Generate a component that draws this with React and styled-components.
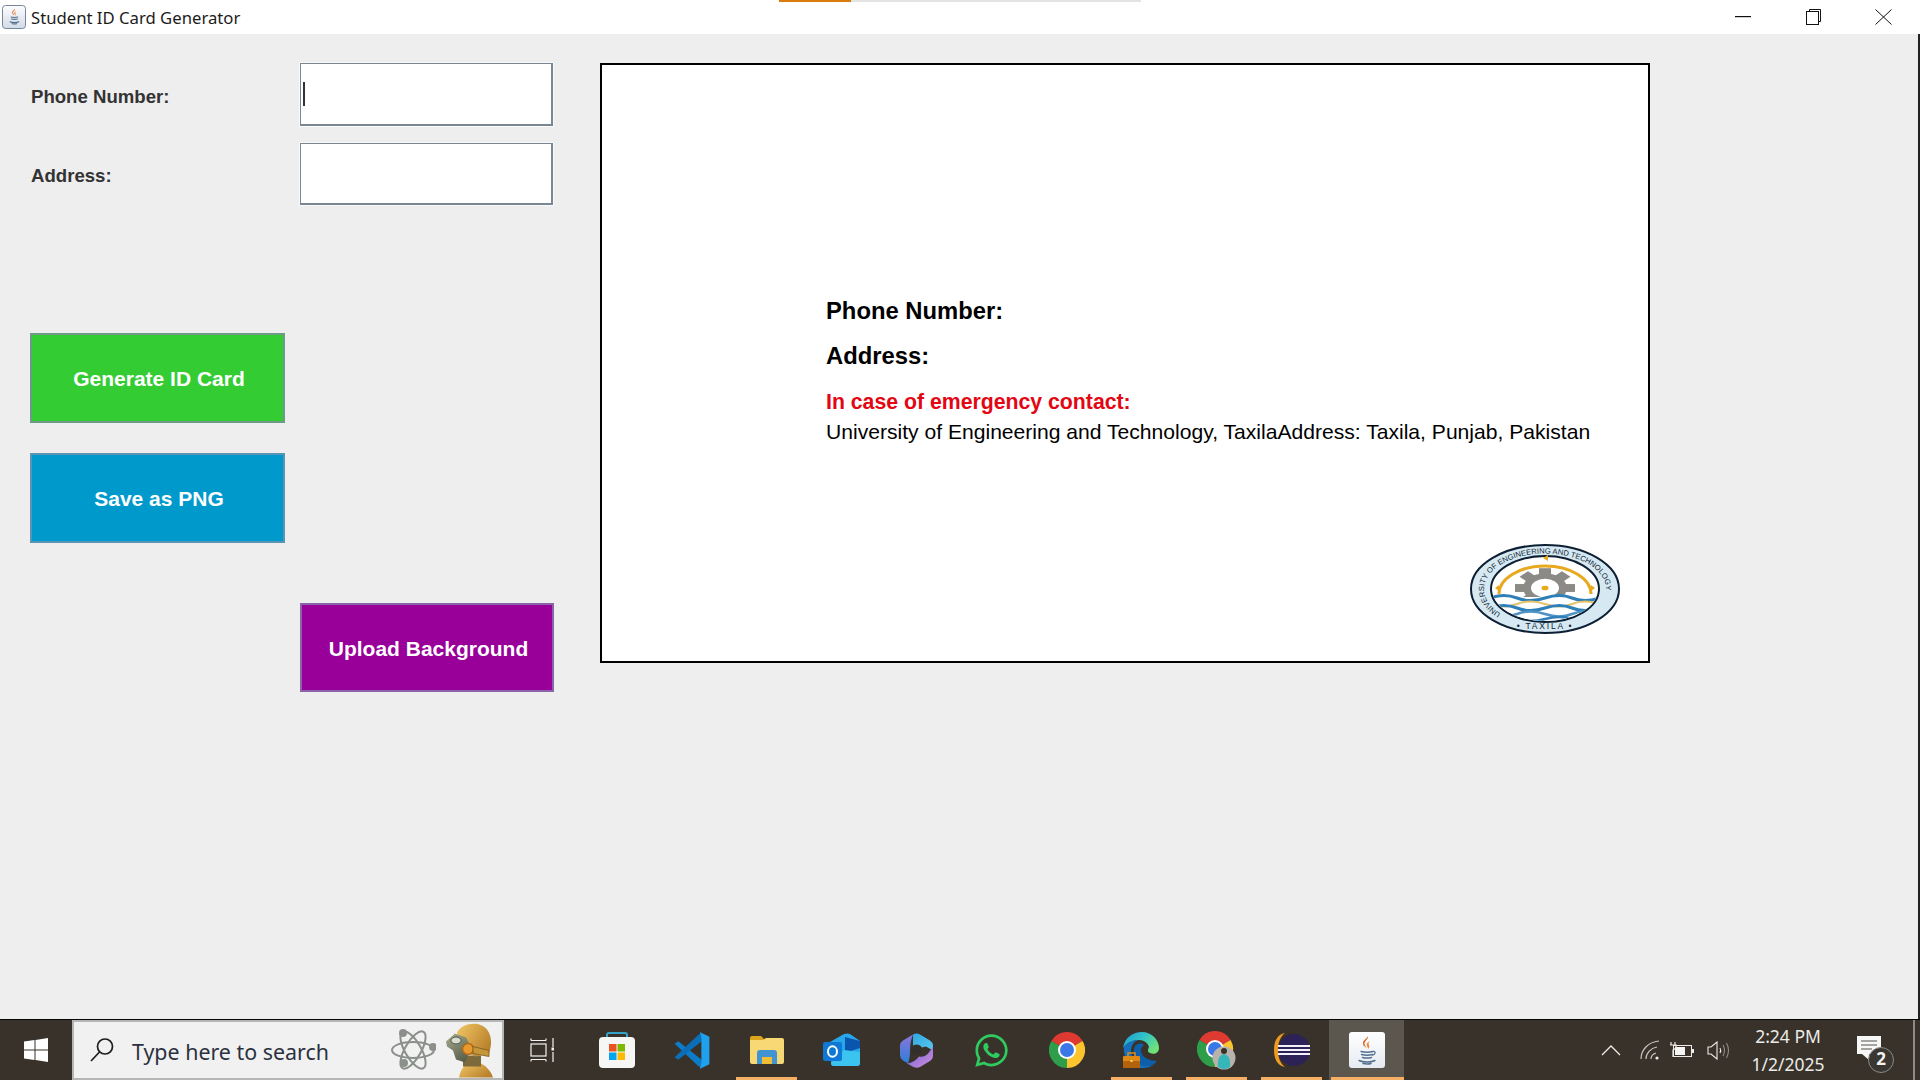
import React from 'react'
import styled, { createGlobalStyle } from 'styled-components'
import { FaWhatsapp } from 'react-icons/fa'

const Global = createGlobalStyle`
  html, body { margin: 0; padding: 0; background: #eee; }
  body { font-family: "Liberation Sans", Arial, sans-serif; }
`

const Screen = styled.div`
  width: 1920px;
  height: 1080px;
  display: flex;
  flex-direction: column;
  overflow: hidden;
  position: relative;
`

const TitleBar = styled.div`
  height: 34px;
  flex: none;
  background: #fff;
  display: flex;
  align-items: center;
  padding-left: 2px;
  padding-right: 2px;
`

const TitleText = styled.span`
  font-family: "Noto Sans", sans-serif;
  font-size: 16.7px;
  color: #1c1c1c;
  margin-left: 5px;
  white-space: nowrap;
`

const WindowButton = styled.div`
  width: 70px;
  height: 34px;
  display: flex;
  align-items: center;
  justify-content: center;
  margin-left: ${p => (p.$first ? 'auto' : '0')};
`

const LoadStrip = styled.div`
  position: absolute;
  top: 0;
  left: 779px;
  width: 362px;
  height: 2px;
  background: linear-gradient(90deg, #d97c0c 0 72px, #e3e3e3 72px);
`

const Main = styled.main`
  flex: 1;
  background: #eee;
  display: flex;
  align-items: flex-start;
  gap: 47px;
  padding: 29px 0 0 30px;
  border-right: 2px solid #222;
`

const Form = styled.div`
  width: 523px;
  flex: none;
  display: flex;
  flex-direction: column;
`

const FieldRow = styled.div`
  display: flex;
  align-items: center;
  margin-bottom: ${p => p.$gap || 0}px;
`

const Label = styled.label`
  width: 270px;
  padding: ${p => p.$top}px 0 0 1px;
  font-size: 18.6px;
  font-weight: 700;
  color: #333;
  box-sizing: border-box;
`

const InputBox = styled.div`
  width: 253px;
  height: ${p => p.$h}px;
  box-sizing: border-box;
  background: #fff;
  border: 1px solid #7a8793;
  border-right: 2px solid #7a8793;
  border-bottom: 2px solid #7a8793;
  outline: 1px solid #fafafa;
  display: flex;
  align-items: center;
  padding-left: 2px;
`

const Caret = styled.span`
  width: 2px;
  height: 24px;
  background: #333;
`

const ActionButton = styled.button`
  width: ${p => (p.$right ? 254 : 255)}px;
  height: ${p => (p.$right ? 89 : 90)}px;
  margin: 0 0 ${p => p.$gap || 0}px ${p => (p.$right ? 270 : 0)}px;
  padding: 2px 0 0 3px;
  background: ${p => p.$bg};
  border: 2px solid ${p => p.$edge};
  color: #fff;
  font-family: "Liberation Sans", Arial, sans-serif;
  font-size: 21px;
  font-weight: 700;
  display: block;
`

const Card = styled.section`
  width: 1050px;
  height: 600px;
  box-sizing: border-box;
  flex: none;
  background: #fff;
  border: 2px solid #000;
  display: flex;
  flex-direction: column;
  padding: 231px 0 0 224px;
  color: #000;
`

const CardHeading = styled.div`
  font-size: 23.8px;
  font-weight: 700;
  line-height: 30px;
  margin-bottom: ${p => p.$gap}px;
`

const EmergencyTitle = styled.div`
  font-size: 21.25px;
  font-weight: 700;
  line-height: 26px;
  color: #e30613;
  margin-top: 3px;
`

const EmergencyText = styled.div`
  font-size: 21.1px;
  line-height: 26px;
  margin-top: 4px;
  white-space: nowrap;
`

const LogoSlot = styled.div`
  align-self: flex-end;
  margin: 99px 28px 0 0;
  height: 90px;
`

const Taskbar = styled.footer`
  height: 60px;
  flex: none;
  background: #38322a;
  border-top: 1px solid #050505;
  display: flex;
  align-items: stretch;
  position: relative;
`

const StartButton = styled.div`
  width: 72px;
  display: flex;
  align-items: center;
  justify-content: center;
`

const SearchBox = styled.div`
  width: 432px;
  box-sizing: border-box;
  background: #f1f1f1;
  border: 2px solid #b6b6b6;
  display: flex;
  align-items: center;
  padding-left: 15px;
  position: relative;
  overflow: hidden;
`

const SearchText = styled.span`
  font-family: "Noto Sans", sans-serif;
  font-size: 21.4px;
  color: #2b3140;
  margin-left: 17px;
  padding-top: 3px;
  white-space: nowrap;
`

const SearchDecor = styled.div`
  margin-left: auto;
  display: flex;
  align-items: flex-end;
  align-self: stretch;
  gap: 9px;
  padding-right: 7px;
`

const AtomSlot = styled.div`
  align-self: center;
  display: flex;
`

const TaskButton = styled.div`
  width: 75px;
  flex: none;
  display: flex;
  align-items: center;
  justify-content: center;
  position: relative;
  background: ${p => (p.$active ? '#5b564e' : 'transparent')};

  &::after {
    content: '';
    display: ${p => (p.$open || p.$active ? 'block' : 'none')};
    position: absolute;
    bottom: 0;
    left: ${p => (p.$active ? 2 : 7)}px;
    right: ${p => (p.$active ? 0 : 7)}px;
    height: 3px;
    background: #f5b066;
  }
`

const Tray = styled.div`
  margin-left: auto;
  display: flex;
  align-items: center;
  padding-right: 15px;
`

const TrayIcon = styled.div`
  display: flex;
  margin-left: ${p => p.$ml}px;
`

const Clock = styled.div`
  width: 100px;
  margin-left: 8px;
  text-align: center;
  font-family: "Noto Sans", sans-serif;
  font-size: 17.5px;
  line-height: 28px;
  color: #ecebe8;
`

const Notify = styled.div`
  position: relative;
  width: 36px;
  height: 44px;
  margin-left: 19px;
  margin-right: 12px;
  padding-top: 8px;
  box-sizing: border-box;
`

const Badge = styled.div`
  position: absolute;
  left: 11px;
  top: 19px;
  width: 26px;
  height: 26px;
  box-sizing: border-box;
  border-radius: 50%;
  background: #3a3631;
  border: 1.5px solid #8b8b88;
  color: #f2f2f2;
  font-family: "Noto Sans", sans-serif;
  font-size: 17px;
  font-weight: 700;
  line-height: 22px;
  text-align: center;
`

const EdgeLine = styled.div`
  position: absolute;
  right: 5px;
  top: 0;
  bottom: 0;
  width: 2px;
  background: #8d8b86;
`

const JavaTile = styled.div`
  width: 36px;
  height: 36px;
  border-radius: 3px;
  background: linear-gradient(#fff, #e6ebf1);
  display: flex;
  align-items: center;
  justify-content: center;
`

const JavaGlyph = ({ size }) => (
  <svg width={size * 0.6} height={size} viewBox="0 0 18 30">
    <path d="M10 1c1 3-4 5-3.500 8 .3 1.500 1.500 2.500 2 4-2-1.500-4-3-3.500-5.500C5.500 4.500 9 4 10 1z" fill="#d9662a" />
    <path d="M12 6c-3 1.500-4 3-3 5 .4 1 1 1.500 1 3 1.500-1.500 1.500-3 .8-4.500-.5-1.200 0-2.300 1.200-3.500z" fill="#e98a3c" />
    <path d="M3 16.500c3 .8 9 .8 12 0M3.500 19.500c3 .8 8 .8 11 0M4.500 22.500c2.500.6 6.500.6 9 0M1 25.500c4 2 12 2 16 0M5 28.500c3 .6 6 .6 8 0" fill="none" stroke="#54708f" strokeWidth="1.400" strokeLinecap="round" />
    <path d="M15 16.500c3-.5 3 3-.8 3.800" fill="none" stroke="#54708f" strokeWidth="1.200" />
  </svg>
)

const TitleIcon = () => (
  <svg width="24" height="24" viewBox="0 0 24 24">
    <defs>
      <linearGradient id="ti" x1="0" y1="0" x2="0" y2="1">
        <stop offset="0" stopColor="#fdfdfd" />
        <stop offset="1" stopColor="#d3dbe6" />
      </linearGradient>
    </defs>
    <rect x=".5" y=".5" width="23" height="23" rx="3" fill="url(#ti)" stroke="#74879f" />
    <g transform="translate(7.500 3) scale(.55)">
      <path d="M10 1c1 3-4 5-3.500 8 .3 1.500 1.500 2.500 2 4-2-1.500-4-3-3.500-5.500C5.500 4.500 9 4 10 1z" fill="#d9662a" />
      <path d="M12 6c-3 1.500-4 3-3 5 .4 1 1 1.500 1 3 1.500-1.500 1.500-3 .8-4.500-.5-1.200 0-2.300 1.200-3.500z" fill="#e98a3c" />
      <path d="M3 16.500c3 .8 9 .8 12 0M3.500 20c3 .8 8 .8 11 0M1 25c4 2 12 2 16 0M5 28.500c3 .6 6 .6 8 0" fill="none" stroke="#54708f" strokeWidth="2" strokeLinecap="round" />
    </g>
  </svg>
)

const UetLogo = () => {
  const teeth = [0, 45, 90, 135, 180, 225, 270, 315]
  return (
    <svg width="150" height="90" viewBox="0 0 150 90">
      <defs>
        <path id="uetTop" d="M31.700 70 A 61 35.500 0 1 1 118.300 70" />
        <clipPath id="uetInner"><ellipse cx="75" cy="45" rx="53" ry="32" /></clipPath>
      </defs>
      <ellipse cx="75" cy="45" rx="74" ry="44" fill="#d6e8f2" stroke="#0c1f33" strokeWidth="2" />
      <ellipse cx="75" cy="45" rx="54" ry="33" fill="#fff" stroke="#0c1f33" strokeWidth="2" />
      <text fontFamily="Liberation Sans, sans-serif" fontSize="7.600" fill="#0c1f33">
        <textPath href="#uetTop" startOffset="1">UNIVERSITY OF ENGINEERING AND TECHNOLOGY</textPath>
      </text>
      <text x="75" y="85" textAnchor="middle" fontFamily="Liberation Sans, sans-serif" fontSize="8.500" letterSpacing="1.800" fill="#0c1f33">• TAXILA •</text>
      <path d="M29 50 A 46 28 0 1 1 121 50" fill="none" stroke="#e8a91f" strokeWidth="3" />
      <path d="M29 41l-4 3 4 3zM121 41l4 3-4 3zM73 14l5-3v6z" fill="#e8a91f" />
      <g transform="translate(75 44) scale(1 .66)">
        {teeth.map(a => (
          <rect key={a} x="-6" y="-30" width="12" height="14" fill="#8c8a87" transform={`rotate(${a})`} />
        ))}
        <circle r="22" fill="#8c8a87" />
        <circle r="14" fill="#fff" />
        <circle r="3.500" fill="#e8a91f" />
      </g>
      <g clipPath="url(#uetInner)" fill="none">
        <rect x="20" y="53" width="110" height="30" fill="#fff" />
        <path d="M20 54q14-5 27 0t28 0 27 0 28 0" stroke="#2f7fb8" strokeWidth="3" />
        <path d="M20 60q14 5 27 0t28 0 27 0 28 0" stroke="#e3c26a" strokeWidth="2" />
        <path d="M20 64q14-5 27 0t28 0 27 0 28 0" stroke="#2f7fb8" strokeWidth="3" />
        <path d="M20 70q14 5 27 0t28 0 27 0 28 0" stroke="#4f93c4" strokeWidth="2.500" />
        <path d="M20 75q14-4 27 0t28 0 27 0 28 0" stroke="#2f7fb8" strokeWidth="2.500" />
      </g>
    </svg>
  )
}

const WindowsIcon = () => (
  <svg width="24" height="24" viewBox="0 0 24 24" fill="#fff">
    <path d="M0 3.600 10.500 2v9.400H0zM11.500 1.900 24 0v11.400H11.500zM0 12.600h10.500V22L0 20.400zM11.500 12.600H24V24l-12.500-1.900z" />
  </svg>
)

const SearchIcon = () => (
  <svg width="26" height="26" viewBox="0 0 26 26" fill="none" stroke="#1d1d1d" strokeWidth="1.700">
    <circle cx="16" cy="9.500" r="7.500" />
    <path d="M10.500 15 2 24" />
  </svg>
)

const AtomIcon = () => (
  <svg width="46" height="46" viewBox="0 0 46 46" fill="none" stroke="#8b908b" strokeWidth="2">
    <ellipse cx="23" cy="23" rx="21" ry="8" />
    <ellipse cx="23" cy="23" rx="21" ry="8" transform="rotate(60 23 23)" />
    <ellipse cx="23" cy="23" rx="21" ry="8" transform="rotate(120 23 23)" />
    <circle cx="13" cy="6" r="3" fill="#8b908b" />
    <circle cx="43" cy="20" r="3" fill="#8b908b" />
    <circle cx="14" cy="36" r="3" fill="#8b908b" />
  </svg>
)

const RobotIcon = () => (
  <svg width="50" height="56" viewBox="0 0 50 55">
    <defs>
      <linearGradient id="rb" x1="0" y1="0" x2="1" y2=".6">
        <stop offset="0" stopColor="#f2c765" />
        <stop offset="1" stopColor="#b9812c" />
      </linearGradient>
      <linearGradient id="rf" x1="0" y1="0" x2=".6" y2="1">
        <stop offset="0" stopColor="#a7ad92" />
        <stop offset="1" stopColor="#59604a" />
      </linearGradient>
    </defs>
    <path d="M14 55c1-6 4-11 8-14h14c6 3 10 8 12 14z" fill="url(#rb)" />
    <path d="M18 33h18v11H18z" fill="#7d6a3c" />
    <path d="M12 10C17 0 35-2 42 7c6 8 4 18 2 24l-14 3-12-6z" fill="url(#rb)" />
    <path d="M1 19l9-8 11 4 5 10-6 15-9-3-3-9-6-4z" fill="url(#rf)" />
    <ellipse cx="11" cy="18" rx="5" ry="3.500" fill="#d9ddd0" stroke="#4f5645" />
    <circle cx="23" cy="26.500" r="5.500" fill="#ea9a2c" stroke="#b06a1c" strokeWidth="1.500" />
    <path d="M28 24l16 4v6l-16-3z" fill="#c6963a" stroke="#7a5a22" strokeWidth=".8" />
  </svg>
)

const TaskViewIcon = () => (
  <svg width="24" height="24" viewBox="0 0 24 24" fill="none" stroke="#f2f2f2" strokeWidth="1.200">
    <path d="M1 2.500h15M1 21.500h15M1 .5v2M16 .5v2M1 21.500v2M16 21.500v2" />
    <rect x="1" y="6" width="15" height="12" />
    <path d="M23 0v9M23 14v10" />
    <rect x="21.500" y="9.500" width="3" height="3" fill="#f2f2f2" stroke="none" />
  </svg>
)

const StoreIcon = () => (
  <svg width="36" height="36" viewBox="0 0 36 36">
    <path d="M8 7V3q0-2 2-2h16q2 0 2 2v4" fill="none" stroke="#37a2c8" strokeWidth="2" />
    <rect y="5" width="36" height="31" rx="4" fill="#f6f6f5" />
    <rect x="10" y="12" width="7.500" height="7.500" fill="#ea5423" />
    <rect x="18.500" y="12" width="7.500" height="7.500" fill="#7fb900" />
    <rect x="10" y="20.500" width="7.500" height="7.500" fill="#00a4ef" />
    <rect x="18.500" y="20.500" width="7.500" height="7.500" fill="#ffb900" />
  </svg>
)

const VsCodeIcon = () => (
  <svg width="38" height="37" viewBox="0 0 100 100">
    <path d="M3 32l10-7 64 51v22L66 91z" fill="#0c7cc9" />
    <path d="M3 68l10 7L77 24V2L66 9z" fill="#0a6fb8" />
    <path d="M72 1l25 12v74L72 99l5-22V24z" fill="#21a1ec" />
    <path d="M72 1l5 23v53l-5 22 3-1V2z" fill="#1b8fdb" />
  </svg>
)

const ExplorerIcon = () => (
  <svg width="34" height="28" viewBox="0 0 34 28">
    <path d="M0 2q0-2 2-2h9l4 4h-15z" fill="#dca51b" />
    <path d="M0 4h13l3-2h16q2 0 2 2v22q0 2-2 2H2q-2 0-2-2z" fill="#f8d775" />
    <path d="M7 28V17q0-3 3-3h14q3 0 3 3v11h-5v-7H12v7z" fill="#3f94d1" />
    <rect x="12" y="21" width="10" height="7" fill="#f0bd36" />
  </svg>
)

const OutlookIcon = () => (
  <svg width="38" height="34" viewBox="0 0 38 34">
    <path d="M7 9 21 1q3-1 6 0l10 7v22q0 3-3 3H11q-3 0-3-3z" fill="#28a8ea" />
    <path d="M22 4l15 4v7l-15 5z" fill="#0a55ad" />
    <path d="M8 30l13-13 16 2v11q0 3-3 3H11q-3 0-3-3z" fill="#3bc4f0" />
    <rect y="9" width="19" height="19" rx="2" fill="#0f78d4" />
    <ellipse cx="9.500" cy="18.500" rx="4.500" ry="5.200" fill="none" stroke="#fff" strokeWidth="2" />
  </svg>
)

const CopilotIcon = () => (
  <svg width="33" height="35" viewBox="0 0 33 35">
    <defs>
      <linearGradient id="cpa" x1="0" y1="0" x2="1" y2="1">
        <stop offset="0" stopColor="#2fa8e0" />
        <stop offset="1" stopColor="#59c8f0" />
      </linearGradient>
      <linearGradient id="cpb" x1="0" y1="0" x2="0" y2="1">
        <stop offset="0" stopColor="#8c76dc" />
        <stop offset="1" stopColor="#2e7ed8" />
      </linearGradient>
      <linearGradient id="cpc" x1="0" y1="0" x2="1" y2="1">
        <stop offset="0" stopColor="#6d5fd0" />
        <stop offset="1" stopColor="#d18fe0" />
      </linearGradient>
    </defs>
    <path d="M13 1.500q3.500-2 7 0l10 6q3 2 3 5v5l-7-4-4 1q-3-5-9-2z" fill="url(#cpa)" />
    <path d="M13 1.500l-10 6q-3 2-3 5v10q0 3 3 5l5 3q2-5 2-13 0-9 3-16z" fill="url(#cpb)" />
    <path d="M33 13v10q0 3-3 5l-10 6q-3 1.500-6.500 0L7 30.500c5-.5 9-3 12-7 5 1 9-1 14-10.500z" fill="url(#cpc)" />
    <circle cx="16.500" cy="17.500" r="5" fill="#33302c" />
  </svg>
)

const ChromeIcon = ({ size = 36, children }) => (
  <svg width={size} height={size} viewBox={`0 0 ${size} ${size}`}>
    <path d="M18 18 2.400 9A18 18 0 0 1 33.600 9z" fill="#de3a32" />
    <path d="M18 18 33.600 9A18 18 0 0 1 18 36z" fill="#fcc52d" />
    <path d="M18 18V36A18 18 0 0 1 2.400 9z" fill="#2f9e4a" />
    <circle cx="18" cy="18" r="9" fill="#fff" />
    <circle cx="18" cy="18" r="7" fill="#3b78e7" />
    {children}
  </svg>
)

const EdgeIcon = () => (
  <svg width="37" height="36" viewBox="0 0 37 36">
    <defs>
      <linearGradient id="eg" x1="0" y1="0" x2="1" y2=".6">
        <stop offset="0" stopColor="#1b9ad6" />
        <stop offset=".55" stopColor="#33c4c4" />
        <stop offset="1" stopColor="#6fe27a" />
      </linearGradient>
    </defs>
    <path d="M0 16C2 5 10 0 19 0c10 0 17 8 17 16 0 5-5 7-9 5-3-1-2-4-1-6-1-4-5-7-10-7C9 8 4 11 0 16z" fill="url(#eg)" />
    <path d="M1 15c3-5 9-7 14-7-5 2-7 7-7 11 0 8 8 15 17 15 3 0 6-1 8-3-4 4-9 5-14 5C8 36 0 28 1 15z" fill="#1570bd" />
    <path d="M12 14c3-3 7-3 9-1-3 2-4 5-2 9 2 4 8 7 15 7-3 4-8 6-13 5-8-2-13-12-9-20z" fill="#0c5fa8" />
    <rect y="24" width="17" height="12" rx="1" fill="#e08a16" />
    <rect y="29" width="17" height="7" rx="1" fill="#b4630c" />
    <rect x="7.500" y="28" width="2" height="2" fill="#f8dc7a" />
    <path d="M5 24v-3h7v3" fill="none" stroke="#e08a16" strokeWidth="1.500" />
  </svg>
)

const EclipseIcon = () => (
  <svg width="36" height="34" viewBox="0 0 36 34">
    <path d="M11 0C3 1 0 9 0 17s3 16 11 17C6 30 4 24 4 17S6 4 11 0z" fill="#ef9a22" />
    <circle cx="20" cy="17" r="16" fill="#2c2257" />
    <path d="M4 12h32v2H4zM4 16h32v2H4zM4 20h32v2H4z" fill="#f3f1f8" />
  </svg>
)

const tasks = [
  { key: 'view', icon: <TaskViewIcon /> },
  { key: 'store', icon: <StoreIcon /> },
  { key: 'code', icon: <VsCodeIcon /> },
  { key: 'files', icon: <ExplorerIcon />, open: true },
  { key: 'outlook', icon: <OutlookIcon /> },
  { key: 'copilot', icon: <CopilotIcon /> },
  { key: 'whatsapp', icon: <FaWhatsapp size={37} color="#2fcb5e" /> },
  { key: 'chrome', icon: <ChromeIcon /> },
  { key: 'edge', icon: <EdgeIcon />, open: true },
  {
    key: 'profile',
    open: true,
    icon: (
      <ChromeIcon size={39}>
        <circle cx="27" cy="27" r="11.500" fill="#b9b2ac" />
        <circle cx="27" cy="20" r="3" fill="#3a3028" />
        <path d="M21 36q-1-12 6-13 7 1 6 13-6 4-12 0z" fill="#35b6b8" />
      </ChromeIcon>
    )
  },
  { key: 'eclipse', icon: <EclipseIcon />, open: true },
  { key: 'java', icon: <JavaTile><JavaGlyph size={30} /></JavaTile>, active: true }
]

export default function App() {
  return (
    <Screen>
      <Global />
      <LoadStrip />
      <TitleBar>
        <TitleIcon />
        <TitleText>Student ID Card Generator</TitleText>
        <WindowButton $first>
          <svg width="16" height="2"><rect width="16" height="1.200" fill="#111" /></svg>
        </WindowButton>
        <WindowButton>
          <svg width="15" height="16" viewBox="0 0 15 16" fill="none" stroke="#111">
            <path d="M3.500 2.500V.5h11v12h-2" />
            <rect x=".5" y="2.500" width="12" height="13" />
          </svg>
        </WindowButton>
        <WindowButton>
          <svg width="17" height="16" viewBox="0 0 17 16" stroke="#111"><path d="M.5.500l16 15M16.500.500l-16 15" /></svg>
        </WindowButton>
      </TitleBar>

      <Main>
        <Form>
          <FieldRow $gap={17}>
            <Label $top={5}>Phone Number:</Label>
            <InputBox $h={63}><Caret /></InputBox>
          </FieldRow>
          <FieldRow $gap={128}>
            <Label $top={3}>Address:</Label>
            <InputBox $h={62} />
          </FieldRow>
          <ActionButton $bg="#33cc33" $edge="#6e9a88" $gap={30}>Generate ID Card</ActionButton>
          <ActionButton $bg="#0099cc" $edge="#5a93b3" $gap={60}>Save as PNG</ActionButton>
          <ActionButton $bg="#990099" $edge="#8a64a8" $right>Upload Background</ActionButton>
        </Form>

        <Card>
          <CardHeading $gap={15}>Phone Number:</CardHeading>
          <CardHeading $gap={15}>Address:</CardHeading>
          <EmergencyTitle>In case of emergency contact:</EmergencyTitle>
          <EmergencyText>University of Engineering and Technology, TaxilaAddress: Taxila, Punjab, Pakistan</EmergencyText>
          <LogoSlot><UetLogo /></LogoSlot>
        </Card>
      </Main>

      <Taskbar>
        <StartButton><WindowsIcon /></StartButton>
        <SearchBox>
          <SearchIcon />
          <SearchText>Type here to search</SearchText>
          <SearchDecor>
            <AtomSlot><AtomIcon /></AtomSlot>
            <RobotIcon />
          </SearchDecor>
        </SearchBox>
        {tasks.map(t => (
          <TaskButton key={t.key} $open={t.open} $active={t.active}>{t.icon}</TaskButton>
        ))}
        <Tray>
          <TrayIcon $ml={0}>
            <svg width="20" height="11" viewBox="0 0 20 11" fill="none" stroke="#ecebe8" strokeWidth="1.300"><path d="M1 10l9-9 9 9" /></svg>
          </TrayIcon>
          <TrayIcon $ml={19}>
            <svg width="20" height="20" viewBox="0 0 20 20" fill="none" stroke="#c9c8c4" strokeWidth="1.200">
              <path d="M1 19C1 10 8 2 19 1M6 19c0-6 5-11 11-12M11 19c0-3 2-5 5-6" />
              <circle cx="17" cy="18" r="1.600" fill="#ecebe8" stroke="none" />
            </svg>
          </TrayIcon>
          <TrayIcon $ml={9}>
            <svg width="25" height="18" viewBox="0 0 25 18">
              <rect x="4.500" y="4.500" width="18" height="11" fill="none" stroke="#ecebe8" />
              <rect x="23" y="8" width="2" height="4" fill="#ecebe8" />
              <rect x="6" y="6" width="10" height="8" fill="#f5f5f3" />
              <path d="M2 1v3M6 1v3M1 4h6v3L4 9v7" fill="none" stroke="#ecebe8" strokeWidth="1.200" />
            </svg>
          </TrayIcon>
          <TrayIcon $ml={13}>
            <svg width="23" height="19" viewBox="0 0 23 19" fill="none" stroke="#ecebe8" strokeWidth="1.100">
              <path d="M1 6h3l6-5v17l-6-5H1z" />
              <path d="M13 7q1.500 2.500 0 5" />
              <path d="M16 4q3 5.500 0 11M19.500 2q4 7.500 0 15" stroke="#8f8c86" />
            </svg>
          </TrayIcon>
          <Clock>2:24 PM<br />1/2/2025</Clock>
          <Notify>
            <svg width="24" height="24" viewBox="0 0 24 24">
              <path d="M0 0h24v18h-12l0 6-7-6H0z" fill="#f7f7f7" />
              <path d="M4 5h16M4 9h16M4 13h11" stroke="#55524c" strokeWidth="1.200" />
            </svg>
            <Badge>2</Badge>
          </Notify>
        </Tray>
        <EdgeLine />
      </Taskbar>
    </Screen>
  )
}
